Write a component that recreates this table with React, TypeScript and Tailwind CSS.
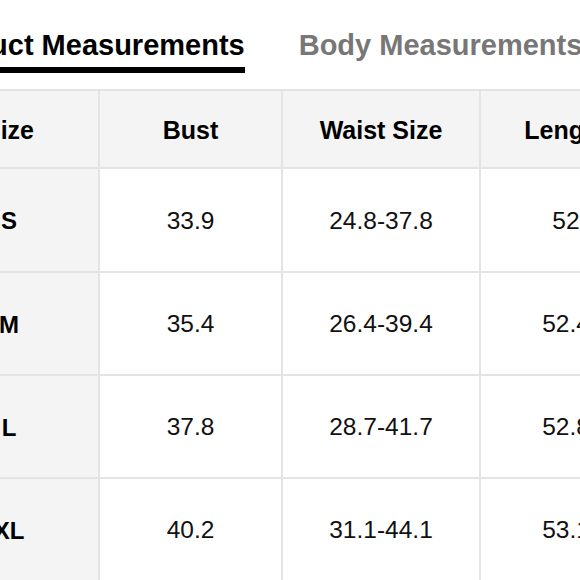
import React from "react";

const rows = [
  { size: "S", bust: "33.9", waist: "24.8-37.8", length: "52" },
  { size: "M", bust: "35.4", waist: "26.4-39.4", length: "52.4" },
  { size: "L", bust: "37.8", waist: "28.7-41.7", length: "52.8" },
  { size: "XL", bust: "40.2", waist: "31.1-44.1", length: "53.1" },
];

const heights = ["h-[102px]", "h-[101px]", "h-[101px]", "h-[101px]"];

export default function App() {
  return (
    <div
      className="w-[580px] h-[580px] overflow-hidden bg-white text-black"
      style={{ fontFamily: '"Liberation Sans", Arial, sans-serif' }}
    >
      {/* tabs */}
      <div className="flex gap-[54px] ml-[-76px] pt-[31px] whitespace-nowrap">
        <div className="flex flex-col shrink-0">
          <span className="text-[29px] leading-none font-bold">Product Measurements</span>
          <div className="mt-[7px] h-[6px] bg-black" />
        </div>
        <div className="shrink-0">
          <span className="text-[29px] leading-none font-bold text-[#777777]">Body Measurements</span>
        </div>
      </div>

      {/* table */}
      <div className="mt-[16px] ml-[-82px] w-max bg-[#e4e4e4] p-[2px] grid grid-cols-[178px_181px_196px_170px] gap-[2px]">
        <div className="h-[76px] pt-[3px] bg-[#f4f4f4] flex items-center justify-center text-[25px] font-bold">Size</div>
        <div className="h-[76px] pt-[3px] bg-[#f4f4f4] flex items-center justify-center text-[25px] font-bold">Bust</div>
        <div className="h-[76px] pt-[3px] bg-[#f4f4f4] flex items-center justify-center text-[25px] font-bold">Waist Size</div>
        <div className="h-[76px] pt-[3px] bg-[#f4f4f4] flex items-center justify-center text-[25px] font-bold">Length</div>

        {rows.map((r, i) => (
          <React.Fragment key={r.size}>
            <div className={`${heights[i]} pt-[2px] bg-[#f4f4f4] flex items-center justify-center text-[24px] font-bold`}>
              {r.size}
            </div>
            <div className={`${heights[i]} pt-[2px] bg-white flex items-center justify-center text-[24.5px] text-[#111]`}>
              {r.bust}
            </div>
            <div className={`${heights[i]} pt-[2px] bg-white flex items-center justify-center text-[24.5px] text-[#111]`}>
              {r.waist}
            </div>
            <div className={`${heights[i]} pt-[2px] bg-white flex items-center justify-center text-[24.5px] text-[#111]`}>
              {r.length}
            </div>
          </React.Fragment>
        ))}
      </div>
    </div>
  );
}
